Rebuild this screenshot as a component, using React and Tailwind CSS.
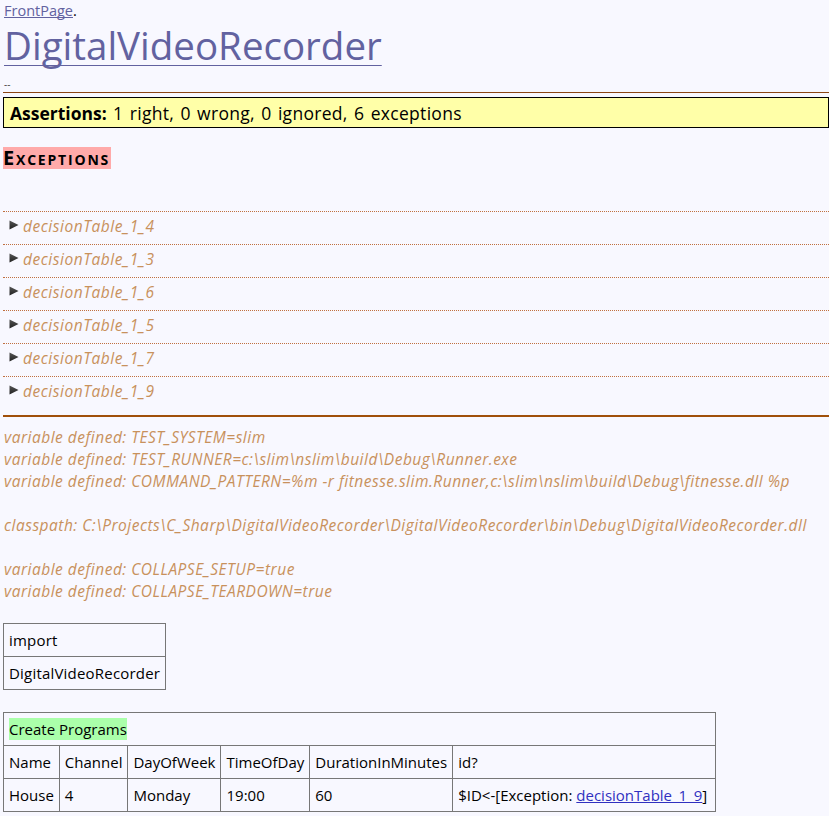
import React from "react";

const exceptions = [
  "decisionTable_1_4",
  "decisionTable_1_3",
  "decisionTable_1_6",
  "decisionTable_1_5",
  "decisionTable_1_7",
  "decisionTable_1_9",
];

function Triangle() {
  return (
    <svg width="10" height="10" viewBox="0 0 10 10" className="shrink-0 mt-[5px]">
      <defs>
        <linearGradient id="tri" x1="0" y1="0" x2="0" y2="1">
          <stop offset="0" stopColor="#555" />
          <stop offset="1" stopColor="#222" />
        </linearGradient>
      </defs>
      <path d="M0.5 0.5 L9.5 5 L0.5 9.5 Z" fill="url(#tri)" />
    </svg>
  );
}

const cell = "border border-[#777] h-[33px] px-[5px] whitespace-nowrap";

export default function App() {
  return (
    <div className="min-h-screen bg-[#f8f8ff] text-black font-['Open_Sans',sans-serif] text-[15.5px] leading-[22px]">
      <div className="pl-[3px]">
        <div className="pt-[1px] pl-[1px] text-[14.5px] leading-[20px]">
          <a href="#" className="text-[#6262a0] underline [text-decoration-skip-ink:none]">FrontPage</a>.
        </div>
        <h1 className="pl-[1px] text-[38.5px] leading-[48px] font-normal">
          <a href="#" className="text-[#6262a0] underline underline-offset-[5px] decoration-1 [text-decoration-skip-ink:none]">
            DigitalVideoRecorder
          </a>
        </h1>
        <div className="mt-[8px] pl-[1px] text-[10px] leading-[14px] text-[#444]">--</div>
        <div className="mt-[1px] border-t border-[#8b4513]" />
        <div className="mt-[4px] border border-black bg-[#ffffa8] pl-[6px] h-[31px] flex items-center text-[17.5px] [word-spacing:1.5px] tracking-[0.3px]">
          <span className="font-bold tracking-normal">Assertions:</span>&nbsp;1 right, 0 wrong, 0 ignored, 6 exceptions
        </div>

        <div className="mt-[19px]">
          <span className="inline-block bg-[#ffaaaa] pr-[1px] font-bold text-[20px] leading-[22px] [font-variant:small-caps] tracking-[1.8px]">
            Exceptions
          </span>
        </div>

        <div className="mt-[41px]">
          {exceptions.map((name) => (
            <div key={name} className="border-t border-dotted border-[#c07040] h-[33px] flex gap-[4px] pl-[6px] pt-[3px]">
              <Triangle />
              <span className="italic text-[#c8915c] tracking-[0.55px]">{name}</span>
            </div>
          ))}
        </div>
        <div className="mt-[6px] border-t-2 border-[#a0500a]" />

        <div className="mt-[9px] italic text-[#c8915c] pl-[1px] tracking-[0.5px] whitespace-nowrap">
          <div>variable defined: TEST_SYSTEM=slim</div>
          <div>variable defined: TEST_RUNNER=c:\slim\nslim\build\Debug\Runner.exe</div>
          <div>
            variable defined: COMMAND_PATTERN=%m -r fitnesse.slim.Runner,c:\slim\nslim\build\Debug\fitnesse.dll %p
          </div>
          <div className="h-[22px]" />
          <div>classpath: C:\Projects\C_Sharp\DigitalVideoRecorder\DigitalVideoRecorder\bin\Debug\DigitalVideoRecorder.dll</div>
          <div className="h-[22px]" />
          <div>variable defined: COLLAPSE_SETUP=true</div>
          <div>variable defined: COLLAPSE_TEARDOWN=true</div>
        </div>

        <table className="mt-[21px] border-collapse text-[15px] tracking-[0.2px]">
          <tbody>
            <tr>
              <td className={cell}>import</td>
            </tr>
            <tr>
              <td className={cell}>DigitalVideoRecorder</td>
            </tr>
          </tbody>
        </table>

        <table className="mt-[22px] border-collapse w-[713px] text-[15px]">
          <tbody>
            <tr>
              <td colSpan={6} className={cell}>
                <span className="bg-[#aaffaa] py-[1px]">Create Programs</span>
              </td>
            </tr>
            <tr>
              {["Name", "Channel", "DayOfWeek", "TimeOfDay", "DurationInMinutes", "id?"].map((h) => (
                <td key={h} className={cell}>{h}</td>
              ))}
            </tr>
            <tr>
              <td className={cell}>House</td>
              <td className={cell}>4</td>
              <td className={cell}>Monday</td>
              <td className={cell}>19:00</td>
              <td className={cell}>60</td>
              <td className={`${cell} w-[270px]`}>
                $ID&lt;-[Exception:{" "}
                <a href="#" className="text-[#3030c0] underline [text-decoration-skip-ink:none]">decisionTable_1_9</a>]
              </td>
            </tr>
          </tbody>
        </table>
      </div>
    </div>
  );
}
